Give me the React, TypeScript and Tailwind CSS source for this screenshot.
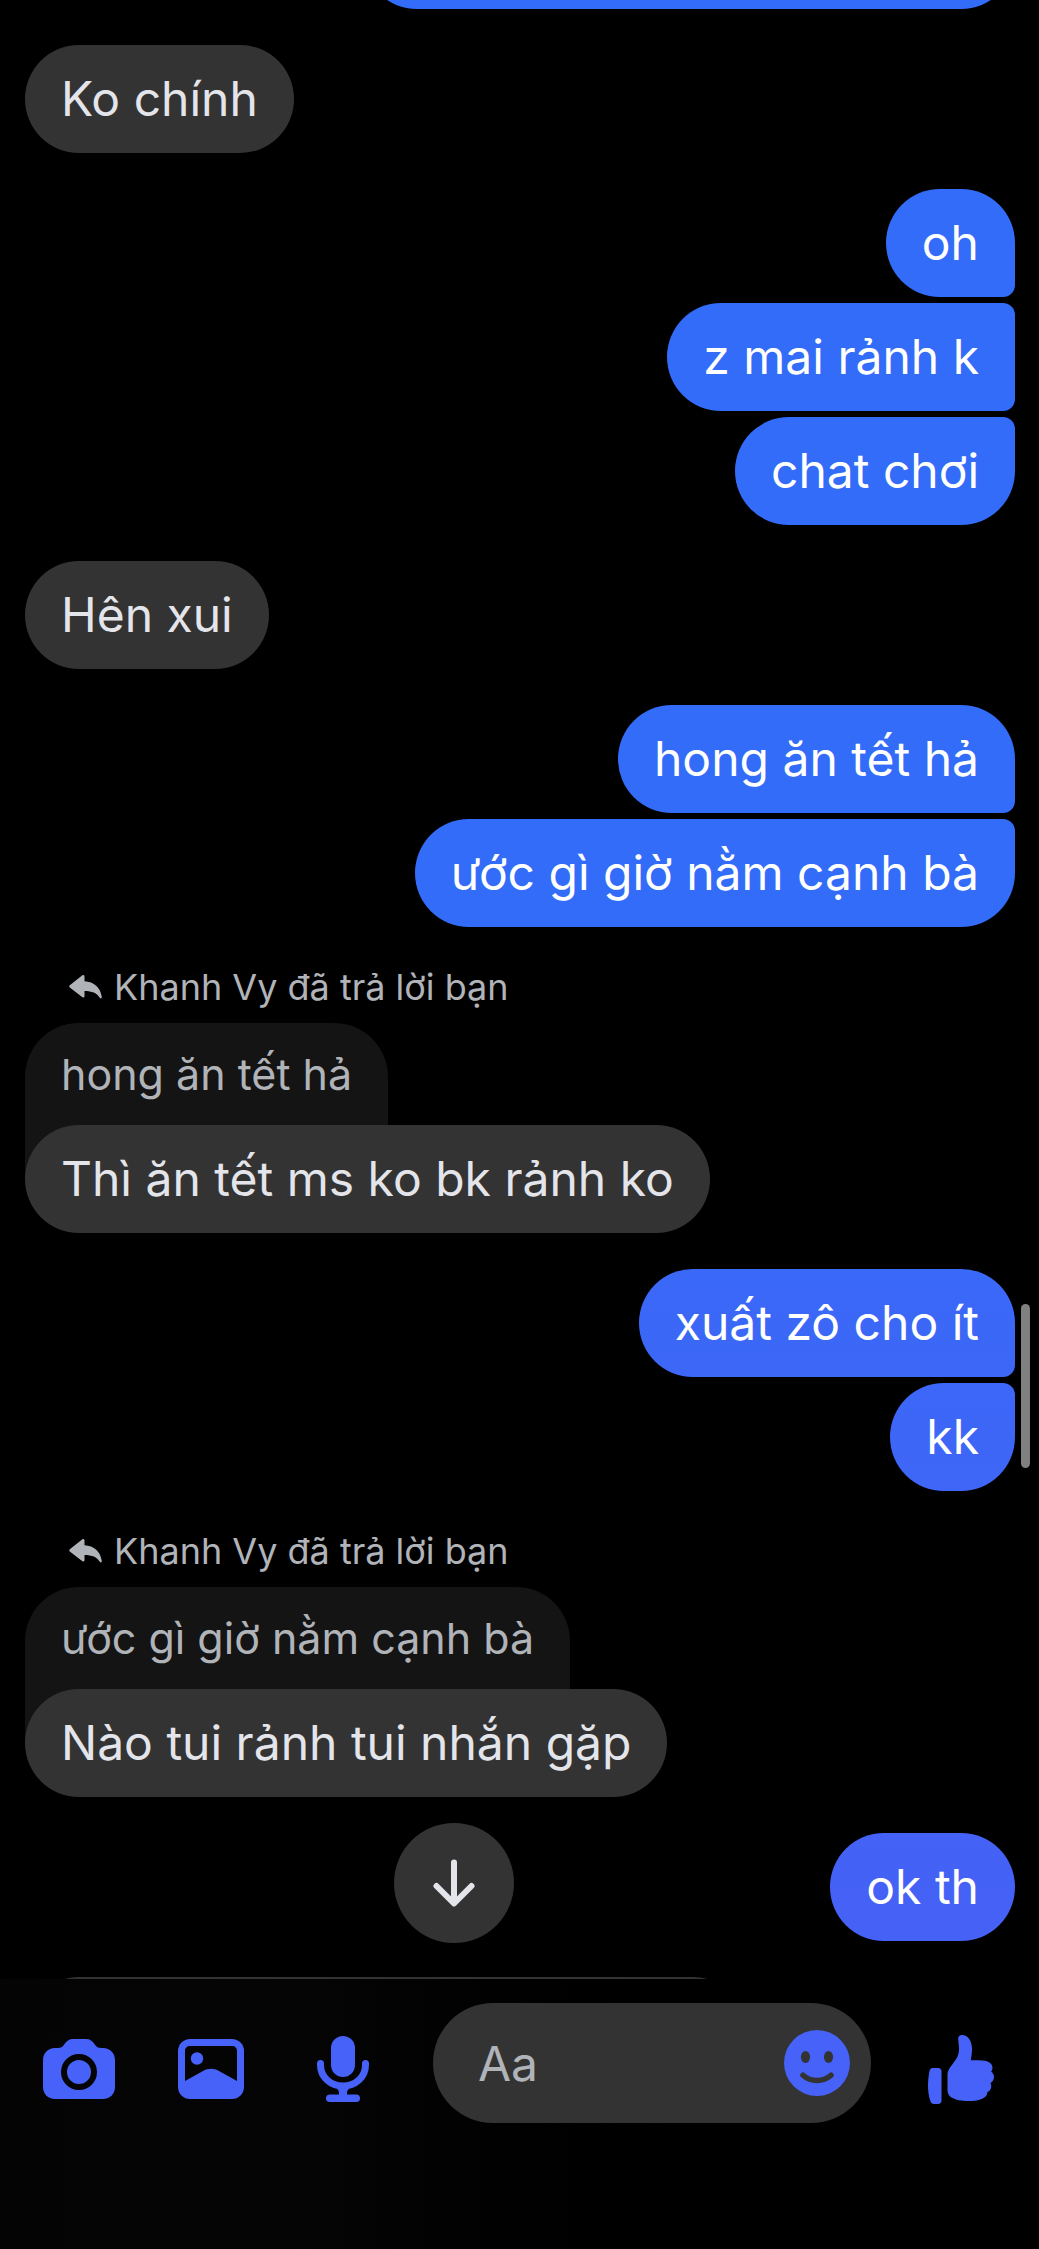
import React from 'react';

type Side = 'me' | 'them';

interface Message {
    text: string;
    quote?: string;
}

interface MessageGroup {
    side: Side;
    messages: Message[];
}

interface BubbleProps {
    side: Side;
    first: boolean;
    last: boolean;
    children: React.ReactNode;
}

interface IconButtonProps {
    label: string;
    children: React.ReactNode;
}

const groups: MessageGroup[] = [
    { side: 'them', messages: [{ text: 'Ko chính' }] },
    { side: 'me', messages: [{ text: 'oh' }, { text: 'z mai rảnh k' }, { text: 'chat chơi' }] },
    { side: 'them', messages: [{ text: 'Hên xui' }] },
    { side: 'me', messages: [{ text: 'hong ăn tết hả' }, { text: 'ước gì giờ nằm cạnh bà' }] },
    { side: 'them', messages: [{ text: 'Thì ăn tết ms ko bk rảnh ko', quote: 'hong ăn tết hả' }] },
    { side: 'me', messages: [{ text: 'xuất zô cho ít' }, { text: 'kk' }] },
    { side: 'them', messages: [{ text: 'Nào tui rảnh tui nhắn gặp', quote: 'ước gì giờ nằm cạnh bà' }] },
    { side: 'me', messages: [{ text: 'ok th' }] },
];

const blue = 'bg-linear-to-b from-[#326cf8] from-40% to-[#4561f6] to-85% bg-fixed';

const Bubble: React.FC<BubbleProps> = ({ side, first, last, children }) => {
    const corners = `${first ? '' : 'rounded-tr-xl'} ${last ? '' : 'rounded-br-xl'}`;
    const colors = side === 'me' ? `${blue} text-white ${corners}` : 'bg-[#333333] text-[#e4e5ea]';

    return (
        <div className={`relative flex min-h-[108px] max-w-full items-center rounded-[54px] px-9 text-5xl ${colors}`}>
            {children}
        </div>
    );
};

const ReplyIcon = () => (
    <svg viewBox="0 0 33 24" className="h-6 w-[33px]" fill="currentColor" aria-hidden="true">
        <path d="M15.500 1.500v4.700C25 6.500 31.500 12.500 32.800 22c.2 1.500-1.300 2-2 .8C28 18 23 16 15.500 16v5c0 1.500-1.300 2-2.400 1.100L.8 12.400c-.8-.6-.8-1.500 0-2.100L13.100.4c1.100-.9 2.400-.4 2.400 1.100z" />
    </svg>
);

const Quote: React.FC<{ text: string }> = ({ text }) => (
    <>
        <div className="flex h-[60px] items-start gap-3 pl-11 text-4xl/[48px] text-[#b0b3b8]">
            <span className="flex h-12 items-center">
                <ReplyIcon />
            </span>
            <span>Khanh Vy đã trả lời bạn</span>
        </div>
        <div className="-mb-[54px] flex h-[156px] items-start rounded-t-[54px] bg-[#141414] px-9 pt-5 text-[43px]/[62px] text-[#b0b3b8]">
            {text}
        </div>
    </>
);

const IconButton: React.FC<IconButtonProps> = ({ label, children }) => (
    <button type="button" aria-label={label} className="flex h-[120px] w-[132px] shrink-0 items-center justify-center pt-3">
        {children}
    </button>
);

const CameraIcon = () => (
    <svg viewBox="0 0 72 60" className="h-[60px] w-[72px]" aria-hidden="true">
        <path
            fill="currentColor"
            d="M30 0h13c4 0 6.500 2 8.500 5 2 3 3.500 4 7 4H60c7 0 12 5 12 12v27c0 7-5 12-12 12H12C5 60 0 55 0 48V21C0 14 5 9 12 9h2.500c3.500 0 5-1 7-4 2-3 4.500-5 8.500-5z"
        />
        <circle cx="36" cy="33" r="15" fill="currentColor" stroke="#040404" strokeWidth="6" />
    </svg>
);

const GalleryIcon = () => (
    <svg viewBox="0 0 66 60" className="h-[60px] w-[66px]" aria-hidden="true">
        <rect width="66" height="60" rx="12" fill="currentColor" />
        <path fill="#040404" d="M12 7h42c3 0 5 2 5 5v30L41 32c-5-3-11-3-16 0L7 42V12c0-3 2-5 5-5z" />
        <circle cx="19" cy="19.500" r="6.200" fill="currentColor" />
    </svg>
);

const MicIcon = () => (
    <svg viewBox="0 0 52 66" className="h-[66px] w-[52px]" fill="none" stroke="currentColor" aria-hidden="true">
        <rect x="14" width="24" height="41" rx="12" fill="currentColor" stroke="none" />
        <path d="M3.500 27.500v1.500C3.500 41 13.500 50 26 50s22.500-9 22.500-21v-1.500" strokeWidth="7" strokeLinecap="round" />
        <path d="M20 53h12c-2 1-2 3-2 6h-8c0-3 0-5-2-6z" fill="currentColor" stroke="none" />
        <path d="M12.800 62.200h26.400" strokeWidth="7.600" strokeLinecap="round" />
    </svg>
);

const SmileIcon = () => (
    <svg viewBox="0 0 66 66" className="size-[66px]" aria-hidden="true">
        <circle cx="33" cy="33" r="33" fill="currentColor" />
        <ellipse cx="21.500" cy="27" rx="4.600" ry="6" fill="#333333" />
        <ellipse cx="44.500" cy="27" rx="4.600" ry="6" fill="#333333" />
        <path d="M19 45.200c8 7 20 7 28 0" fill="none" stroke="#333333" strokeWidth="5.500" strokeLinecap="round" />
    </svg>
);

const LikeIcon = () => (
    <svg viewBox="0 0 66 69" className="h-[69px] w-[66px]" fill="currentColor" aria-hidden="true">
        <path d="M4.500 33H10c2.300 0 3.500 1.200 3.500 3.500v29c0 2.300-1.200 3.500-3.500 3.500H6c-2 0-3-1-3.700-3C.8 61.500 0 56 0 51s.5-10.500 1.500-15c.5-2 1.300-3 3-3z" />
        <path d="M34 0c6 0 10 6 10 14 0 4-.6 7.500-1.200 11.200H51c8.500 0 13.500 2.800 13.500 7.300 0 1.500-.5 3-1.300 4.200 1.800 1.300 2.800 3.200 2.800 5.300 0 2.500-1.300 4.800-3.500 6 .5 1 .8 2 .8 3.200 0 2.600-1.600 5-4 6 .3 5.500-7.500 8.800-18.300 8.800-8 0-13.500-1-17.500-3.500-2.500-1.600-4-3.800-4-7.500V40c0-4.500 2.500-7.500 5.500-11.500 3.500-4.600 6-8 6-14.500 0-4-.8-7.500-.8-10.500 0-2.300 1.600-3.500 3.800-3.500z" />
    </svg>
);

const App: React.FC = () => (
    <div className="flex h-screen flex-col overflow-hidden bg-black font-['Inter','Liberation_Sans',sans-serif]">
        <main className="relative min-h-0 flex-1 overflow-hidden">
            <div className="-mt-[99px] flex flex-col gap-9 pr-6 pl-[25px]">
                <div className={`h-[108px] w-[652px] max-w-full self-end rounded-[54px] ${blue}`} />
                {groups.map((group, groupIndex) => (
                    <div
                        key={groupIndex}
                        className={`flex flex-col gap-[6px] ${group.side === 'me' ? 'items-end' : 'items-start'}`}
                    >
                        {group.messages.map((message, index) => (
                            <div key={message.text} className="flex flex-col items-start">
                                {message.quote && <Quote text={message.quote} />}
                                <Bubble
                                    side={group.side}
                                    first={index === 0}
                                    last={index === group.messages.length - 1}
                                >
                                    {message.text}
                                </Bubble>
                            </div>
                        ))}
                    </div>
                ))}
                <div className="h-[108px] w-[722px] max-w-full rounded-[54px] bg-[#333333]" />
            </div>

            <button
                type="button"
                aria-label="Cuộn xuống"
                className="absolute bottom-9 left-[394px] flex size-[120px] items-center justify-center rounded-full bg-[#333333] text-[#e4e5ea]"
            >
                <svg viewBox="0 0 42 48" className="h-12 w-[42px]" fill="none" stroke="currentColor" strokeWidth="6" strokeLinecap="round" strokeLinejoin="round" aria-hidden="true">
                    <path d="M21 3.500v40M3.500 27L21 44.500 38.500 27" />
                </svg>
            </button>
            <div className="absolute right-[9px] bottom-[511px] h-[164px] w-[9px] rounded-full bg-[#808080]" />
        </main>

        <footer className="h-[270px] shrink-0 bg-linear-to-r from-[#040404] via-[#050505] via-30% to-black to-80% pt-6 pr-3 pl-[13px] text-[#4662f8]">
            <div className="flex items-center">
                <IconButton label="Máy ảnh">
                    <CameraIcon />
                </IconButton>
                <IconButton label="Thư viện ảnh">
                    <GalleryIcon />
                </IconButton>
                <IconButton label="Ghi âm">
                    <MicIcon />
                </IconButton>
                <div className="mx-6 flex h-[120px] min-w-0 flex-1 items-center rounded-[60px] bg-[#333333] pr-[21px] pl-[45px]">
                    <input
                        type="text"
                        aria-label="Tin nhắn"
                        placeholder="Aa"
                        className="min-w-0 flex-1 bg-transparent text-5xl text-[#e4e5ea] outline-none placeholder:text-[#b0b3b8]"
                    />
                    <button type="button" aria-label="Biểu tượng cảm xúc">
                        <SmileIcon />
                    </button>
                </div>
                <IconButton label="Thích">
                    <LikeIcon />
                </IconButton>
            </div>
        </footer>
    </div>
);

export default App;
